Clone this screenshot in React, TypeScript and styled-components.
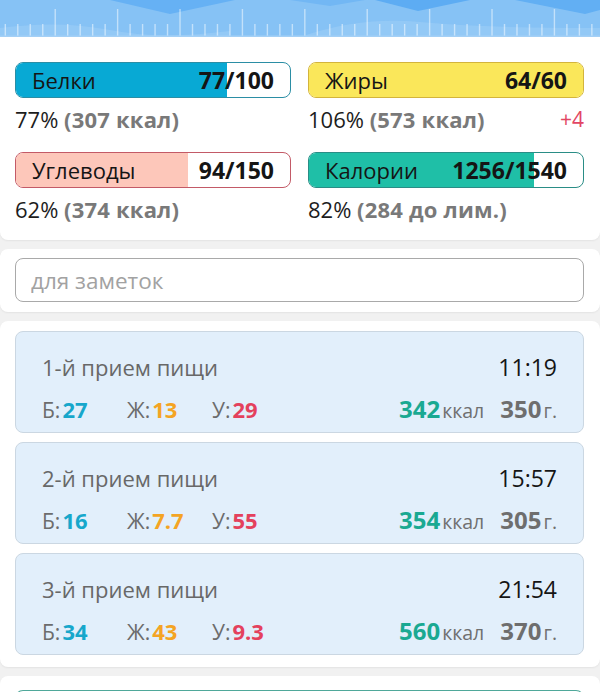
import React from 'react';
import styled, { createGlobalStyle } from 'styled-components';

const GlobalStyle = createGlobalStyle`
	html, body {
		margin: 0;
		padding: 0;
		background: #f1f1f1;
		font-family: "Open Sans", Roboto, sans-serif;
		color: #1b1b1b;
	}
	* { box-sizing: border-box; }
`;

type Macro = {
	label: string;
	value: string;
	pct: number;
	fill: string;
	border: string;
	percent: string;
	extra: string;
	over?: string;
};

const macros: Macro[] = [
	{ label: 'Белки', value: '77/100', pct: 77, fill: '#08a9d4', border: '#2b8ea5', percent: '77%', extra: '(307 ккал)' },
	{ label: 'Жиры', value: '64/60', pct: 100, fill: '#fae75a', border: '#d3b43c', percent: '106%', extra: '(573 ккал)', over: '+4' },
	{ label: 'Углеводы', value: '94/150', pct: 62.7, fill: '#fdc7ba', border: '#c35a67', percent: '62%', extra: '(374 ккал)' },
	{ label: 'Калории', value: '1256/1540', pct: 82, fill: '#1fbfa7', border: '#2a8d86', percent: '82%', extra: '(284 до лим.)' },
];

type Meal = { title: string; time: string; p: string; f: string; c: string; kcal: string; grams: string };

const meals: Meal[] = [
	{ title: '1-й прием пищи', time: '11:19', p: '27', f: '13', c: '29', kcal: '342', grams: '350' },
	{ title: '2-й прием пищи', time: '15:57', p: '16', f: '7.7', c: '55', kcal: '354', grams: '305' },
	{ title: '3-й прием пищи', time: '21:54', p: '34', f: '43', c: '9.3', kcal: '560', grams: '370' },
];

const Header = styled.header`
	height: 37px;
	overflow: hidden;
	background: #86c2f5;

	svg {
		display: block;
	}
`;

const Card = styled.section<{ $flatTop?: boolean }>`
	background: #fff;
	border-radius: ${(p) => (p.$flatTop ? '0 0 8px 8px' : '8px')};
	box-shadow: 0 1px 2px rgba(0, 0, 0, 0.06);
	margin-bottom: 9px;
`;

const SummaryGrid = styled.div`
	display: grid;
	grid-template-columns: 1fr 1fr;
	column-gap: 17px;
	row-gap: 18px;
	padding: 25px 16px 16px 15px;
`;

const MacroBox = styled.div`
	display: flex;
	flex-direction: column;
`;

const Bar = styled.div<{ $border: string }>`
	position: relative;
	height: 36px;
	border: 1.5px solid ${(p) => p.$border};
	border-radius: 8px;
	overflow: hidden;
	background: #fff;
`;

const BarFill = styled.div<{ $fill: string }>`
	position: absolute;
	left: 0;
	top: 0;
	bottom: 0;
	background: ${(p) => p.$fill};
`;

const BarContent = styled.div`
	position: relative;
	height: 100%;
	display: flex;
	align-items: center;
	justify-content: space-between;
	padding: 0 16px 0 16px;
	font-size: 22px;
	color: #151515;
`;

const BarValue = styled.span`
	font-weight: 700;
	font-size: 23px;
`;

const Caption = styled.div`
	margin-top: 6px;
	height: 30px;
	display: flex;
	align-items: center;
	justify-content: space-between;
	font-size: 22px;
	color: #1d1d1d;
`;

const Muted = styled.span`
	color: #797979;
	font-weight: 700;
	letter-spacing: 0.2px;
`;

const Over = styled.span`
	color: #e24664;
	font-size: 21px;
`;

const NotesWrap = styled.div`
	padding: 9px 16px 10px 15px;
`;

const NotesInput = styled.input`
	display: block;
	width: 100%;
	height: 44px;
	border: 1.5px solid #a9a9a9;
	border-radius: 8px;
	padding: 0 15px;
	font-family: "Open Sans", Roboto, sans-serif;
	font-size: 22.5px;
	color: #222;
	background: #fff;
	outline: none;

	&::placeholder {
		color: #a2a2a2;
	}
`;

const MealList = styled.div`
	display: flex;
	flex-direction: column;
	gap: 9px;
	padding: 10px 16px 12px 15px;
`;

const MealCard = styled.div`
	height: 102px;
	background: #e2effb;
	border: 1.5px solid #cbd7e2;
	border-radius: 8px;
	padding: 19px 26px 0 26px;
	display: flex;
	flex-direction: column;
	gap: 9px;
`;

const MealRow = styled.div`
	display: flex;
	align-items: baseline;
	justify-content: space-between;
`;

const MealTitle = styled.span`
	font-size: 22px;
	color: #686868;
`;

const MealTime = styled.span`
	font-size: 23px;
	color: #151515;
`;

const MacroItems = styled.div`
	display: flex;
	align-items: baseline;
`;

const MacroItem = styled.span`
	width: 85px;
	font-size: 21px;
	color: #6c6c6c;
`;

const Num = styled.b<{ $color: string; $size?: number }>`
	font-weight: 700;
	font-size: ${(p) => p.$size ?? 22}px;
	color: ${(p) => p.$color};
	margin-left: 2px;
`;

const Totals = styled.div`
	display: flex;
	align-items: baseline;
	font-size: 19.5px;
	color: #707070;
`;

const Unit = styled.span<{ $gap?: number }>`
	margin-left: 2px;
	margin-right: ${(p) => p.$gap ?? 0}px;
`;

const NextWrap = styled.div`
	padding: 14px 16px 0 15px;
`;

const NextBar = styled.div`
	height: 20px;
	border: 1.5px solid #4fa89a;
	border-bottom: none;
	border-radius: 8px 8px 0 0;
	background: #fff;
`;

const RulerHeader = () => {
	const ticks = [];
	for (let i = 0; i < 49; i++) {
		const x = 4.6 + i * 12.48;
		const long = i % 5 === 4;
		ticks.push(<rect key={i} x={x} y={long ? 9 : 24} width={1.4} height={long ? 28 : 13} fill="#ffffff" opacity={0.5} />);
	}
	return (
		<Header>
			<svg width="600" height="37" viewBox="0 0 600 37">
				<path d="M110 0 L170 14 L235 0 Z" fill="#66b1f4" />
				<path d="M290 0 L330 6 L365 0 Z" fill="#72b7f4" />
				<path d="M375 0 L418 11 L470 0 Z" fill="#5dacf3" />
				<path d="M515 0 L585 14 L600 10 L600 0 Z" fill="#62aff3" />
				<path d="M0 28 Q60 20 110 30 T230 31 L230 37 L0 37 Z" fill="#9dcdf7" opacity={0.6} />
				<path d="M300 37 Q360 16 420 22 T600 28 L600 37 Z" fill="#9dcdf7" opacity={0.6} />
				{ticks}
				<rect x="0" y="35.5" width="600" height="1.5" fill="#a4d0f6" />
			</svg>
		</Header>
	);
};

export default function App() {
	return (
		<>
			<GlobalStyle />
			<RulerHeader />
			<Card $flatTop>
				<SummaryGrid>
					{macros.map((m) => (
						<MacroBox key={m.label}>
							<Bar $border={m.border}>
								<BarFill $fill={m.fill} style={{ width: `${m.pct}%` }} />
								<BarContent>
									<span>{m.label}</span>
									<BarValue>{m.value}</BarValue>
								</BarContent>
							</Bar>
							<Caption>
								<span>
									{m.percent} <Muted>{m.extra}</Muted>
								</span>
								{m.over && <Over>{m.over}</Over>}
							</Caption>
						</MacroBox>
					))}
				</SummaryGrid>
			</Card>
			<Card>
				<NotesWrap>
					<NotesInput placeholder="для заметок" />
				</NotesWrap>
			</Card>
			<Card>
				<MealList>
					{meals.map((meal) => (
						<MealCard key={meal.title}>
							<MealRow>
								<MealTitle>{meal.title}</MealTitle>
								<MealTime>{meal.time}</MealTime>
							</MealRow>
							<MealRow>
								<MacroItems>
									<MacroItem>
										Б:<Num $color="#17a7cb">{meal.p}</Num>
									</MacroItem>
									<MacroItem>
										Ж:<Num $color="#f4a423">{meal.f}</Num>
									</MacroItem>
									<MacroItem>
										У:<Num $color="#e4415d">{meal.c}</Num>
									</MacroItem>
								</MacroItems>
								<Totals>
									<Num $color="#1aa992" $size={24}>{meal.kcal}</Num>
									<Unit $gap={14}>ккал</Unit>
									<Num $color="#6e6e6e" $size={24}>{meal.grams}</Num>
									<Unit>г.</Unit>
								</Totals>
							</MealRow>
						</MealCard>
					))}
				</MealList>
			</Card>
			<Card>
				<NextWrap>
					<NextBar />
				</NextWrap>
			</Card>
		</>
	);
}
